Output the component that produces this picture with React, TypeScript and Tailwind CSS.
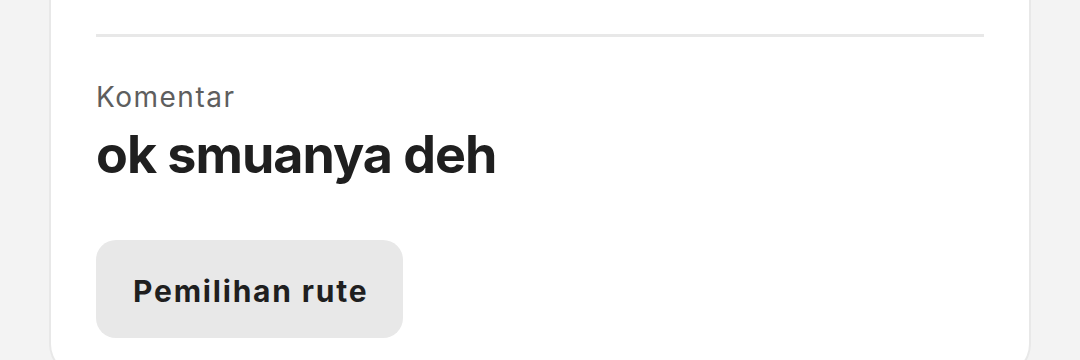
export default function App() {
  return (
    <div
      className="h-[360px] w-[1080px] overflow-hidden bg-[#f3f3f3]"
      style={{ fontFamily: "Inter, 'Noto Sans', sans-serif" }}
    >
      <div className="mx-[49px] rounded-b-[32px] border-x-2 border-b-2 border-[#e8e8e8] bg-white px-[45px] pt-[34px] pb-[36px]">
        <div className="h-[3px] bg-[#e8e8e8]" />
        <p className="mt-[42px] text-[28px] leading-[36px] tracking-[1.5px] text-[#5e5e5e]">Komentar</p>
        <h1 className="mt-[10px] text-[52px] font-bold leading-[60px] tracking-[-1px] text-[#1f1f1f]">
          ok smuanya deh
        </h1>
        <button className="mt-[55px] flex h-[98px] items-center rounded-[20px] bg-[#e8e8e8] pl-[37px] pr-[35px] pt-[5px] text-[30px] font-bold tracking-[1.8px] text-[#1f1f1f]">
          Pemilihan rute
        </button>
      </div>
    </div>
  );
}
